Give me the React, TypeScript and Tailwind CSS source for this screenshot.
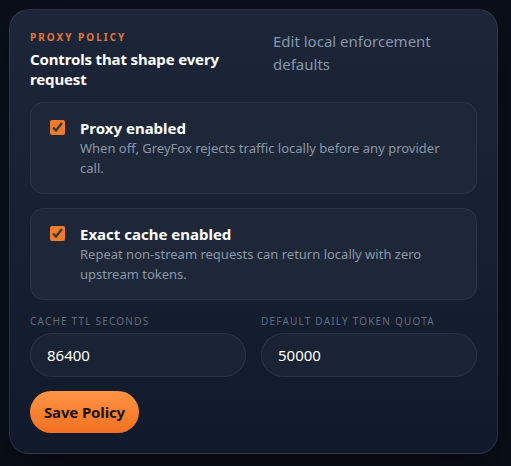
const font = { fontFamily: '"Trebuchet MS", "Noto Sans", sans-serif' };

const toggles = [
  {
    title: 'Proxy enabled',
    desc: 'When off, GreyFox rejects traffic locally before any provider call.',
  },
  {
    title: 'Exact cache enabled',
    desc: 'Repeat non-stream requests can return locally with zero upstream tokens.',
  },
];

const fields = [
  { label: 'Cache TTL seconds', value: '86400' },
  { label: 'Default daily token quota', value: '50000' },
];

export default function App() {
  return (
    <div
      className="min-h-[466px] w-[511px] bg-[#0a0f1a] pt-[9px] pl-[9px] font-['Noto_Sans',sans-serif]"
      style={font}
    >
      <section className="w-[489px] rounded-[20px] border border-white/[0.09] bg-gradient-to-b from-[#1c2638] to-[#111a2a] px-5 pt-5 pb-5 shadow-[0_20px_50px_rgba(0,0,0,0.4)]">
        {/* Header */}
        <div className="flex justify-between">
          <div className="w-[215px]">
            <div className="text-[10px] font-bold uppercase leading-[15px] tracking-[0.2em] text-[#e0763a]">
              Proxy Policy
            </div>
            <h2 className="mt-[4px] text-[15px] font-bold leading-[20px] tracking-[-0.01em] text-white">
              Controls that shape every request
            </h2>
          </div>
          <p className="w-[204px] text-[15px] leading-[23px] text-[#8797ab]">
            Edit local enforcement defaults
          </p>
        </div>

        {/* Toggles */}
        <div className="mt-[13px] flex flex-col gap-[14px]">
          {toggles.map((t) => (
            <label
              key={t.title}
              className="flex gap-[15px] rounded-[14px] border border-white/[0.06] bg-[#1e2738] py-[15px] pr-5 pl-[19px]"
            >
              <input
                type="checkbox"
                defaultChecked
                className="m-0 mt-[2px] h-[15px] w-[15px] shrink-0 accent-[#f07a2e]"
              />
              <div>
                <div className="text-[15px] font-bold leading-[20px] text-white">{t.title}</div>
                <div className="text-[13px] leading-[20px] text-[#8a97a8]">{t.desc}</div>
              </div>
            </label>
          ))}
        </div>

        {/* Fields */}
        <div className="mt-[13px] grid grid-cols-2 gap-[15px]">
          {fields.map((f) => (
            <div key={f.label}>
              <div className="text-[10px] uppercase leading-[16px] tracking-[0.12em] text-[#5f6d80]">
                {f.label}
              </div>
              <input
                type="text"
                defaultValue={f.value}
                className="mt-[4px] h-[44px] w-full rounded-full border border-white/[0.08] bg-[#1a2334] px-4 text-[15px] text-white outline-none"
                style={font}
              />
            </div>
          ))}
        </div>

        <button
          type="button"
          className="mt-[14px] h-[42px] rounded-full bg-gradient-to-b from-[#ff9443] to-[#f27020] px-[14px] text-[15px] font-bold tracking-[-0.01em] text-[#1a1108]"
          style={font}
        >
          Save Policy
        </button>
      </section>
    </div>
  );
}
